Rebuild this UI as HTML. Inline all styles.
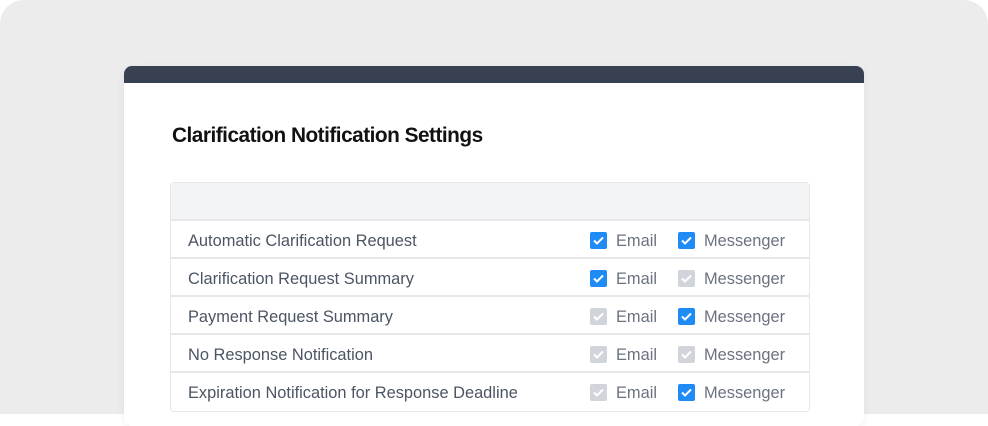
<!DOCTYPE html>
<html><head><style>
*{margin:0;padding:0;box-sizing:border-box}
html,body{width:988px;height:414px;overflow:hidden}
body{background:#fff;font-family:"Liberation Sans",sans-serif}
.bg{position:absolute;left:0;top:0;width:988px;height:414px;background:#ececec;border-radius:24px 24px 0 0}
.card{position:absolute;left:124px;top:66px;width:740px;height:360px;background:#fff;border-radius:8px;overflow:hidden;box-shadow:0 2px 8px rgba(0,0,0,.06)}
.bar{height:17px;background:#374151}
h1{position:absolute;left:48px;top:58px;font-size:20.8px;font-weight:bold;color:#111;letter-spacing:-0.5px}
.tbl{position:absolute;left:46px;top:116px;width:640px;border:1px solid #e5e7eb;border-radius:4px}
.hd{height:38px;background:#f3f4f6;border-bottom:2px solid #e5e7eb}
.row{height:38px;border-bottom:2px solid #e5e7eb;position:relative;font-size:16.4px;color:#4b5563}
.row:last-child{border-bottom:none}
.lab{position:absolute;left:17px;top:11px}
.cb{position:absolute;top:11px;width:17px;height:17px;border-radius:2px;background:#1f8bf5}
.cb.off{background:#d1d5db}
.cb svg{position:absolute;left:3px;top:4px}
.t{position:absolute;top:11px;color:#6b7280}
</style></head><body>
<div class="bg"></div>
<div class="card"><div class="bar"></div>
<h1>Clarification Notification Settings</h1>
<div class="tbl"><div class="hd"></div>
<div class="row"><span class="lab">Automatic Clarification Request</span><span class="cb" style="left:419px"><svg width="11" height="9"><path d="M1 4.5L4 7.5L10 1.5" stroke="#fff" stroke-width="2" fill="none"/></svg></span><span class="t" style="left:445px">Email</span><span class="cb" style="left:507px"><svg width="11" height="9"><path d="M1 4.5L4 7.5L10 1.5" stroke="#fff" stroke-width="2" fill="none"/></svg></span><span class="t" style="left:533px">Messenger</span></div>
<div class="row"><span class="lab">Clarification Request Summary</span><span class="cb" style="left:419px"><svg width="11" height="9"><path d="M1 4.5L4 7.5L10 1.5" stroke="#fff" stroke-width="2" fill="none"/></svg></span><span class="t" style="left:445px">Email</span><span class="cb off" style="left:507px"><svg width="11" height="9"><path d="M1 4.5L4 7.5L10 1.5" stroke="#fff" stroke-width="2" fill="none"/></svg></span><span class="t" style="left:533px">Messenger</span></div>
<div class="row"><span class="lab">Payment Request Summary</span><span class="cb off" style="left:419px"><svg width="11" height="9"><path d="M1 4.5L4 7.5L10 1.5" stroke="#fff" stroke-width="2" fill="none"/></svg></span><span class="t" style="left:445px">Email</span><span class="cb" style="left:507px"><svg width="11" height="9"><path d="M1 4.5L4 7.5L10 1.5" stroke="#fff" stroke-width="2" fill="none"/></svg></span><span class="t" style="left:533px">Messenger</span></div>
<div class="row"><span class="lab">No Response Notification</span><span class="cb off" style="left:419px"><svg width="11" height="9"><path d="M1 4.5L4 7.5L10 1.5" stroke="#fff" stroke-width="2" fill="none"/></svg></span><span class="t" style="left:445px">Email</span><span class="cb off" style="left:507px"><svg width="11" height="9"><path d="M1 4.5L4 7.5L10 1.5" stroke="#fff" stroke-width="2" fill="none"/></svg></span><span class="t" style="left:533px">Messenger</span></div>
<div class="row"><span class="lab">Expiration Notification for Response Deadline</span><span class="cb off" style="left:419px"><svg width="11" height="9"><path d="M1 4.5L4 7.5L10 1.5" stroke="#fff" stroke-width="2" fill="none"/></svg></span><span class="t" style="left:445px">Email</span><span class="cb" style="left:507px"><svg width="11" height="9"><path d="M1 4.5L4 7.5L10 1.5" stroke="#fff" stroke-width="2" fill="none"/></svg></span><span class="t" style="left:533px">Messenger</span></div>
</div></div>
</body></html>
